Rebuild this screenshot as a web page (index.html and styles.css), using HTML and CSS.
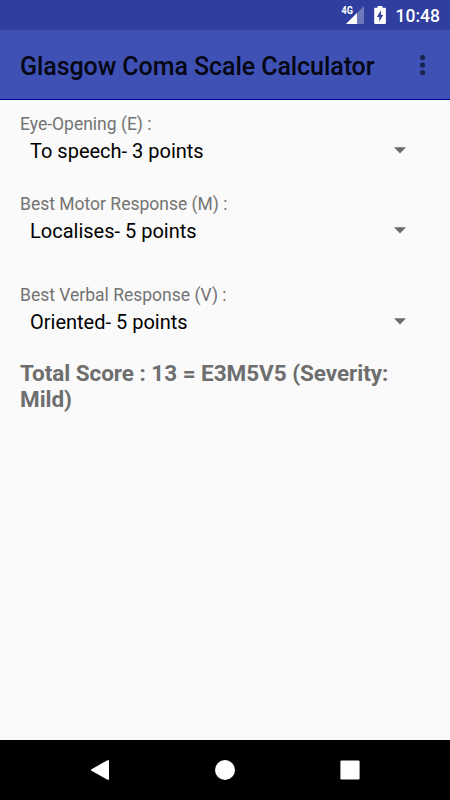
FILE: index.html
```
<!DOCTYPE html>
<html lang="en">
<head>
    <meta charset="UTF-8">
    <meta name="viewport" content="width=device-width, initial-scale=1.0">
    <title>Glasgow Coma Scale Calculator</title>
    <link rel="stylesheet" href="styles.css">
</head>
<body>
    <div class="status-bar">
        <svg class="signal" width="24" height="20" viewBox="0 0 24 20">
            <path d="M23 1v18H5z" fill="#fff" fill-opacity="0.3"/>
            <path d="M16 8v11H5z" fill="#fff"/>
            <rect x="0" y="0" width="12.5" height="10" fill="#303f9f"/>
            <text class="network" x="0.6" y="9" textLength="11.4" lengthAdjust="spacingAndGlyphs">4G</text>
        </svg>
        <svg class="battery" width="12" height="18" viewBox="0 0 12 18">
            <path d="M3.6 0h4.8v1.8h2.4q1.1 0 1.1 1.1v14q0 1.1-1.1 1.1H1.3q-1.1 0-1.1-1.1v-14q0-1.1 1.1-1.1h2.3z" fill="#fff"/>
            <path d="M7 4.2L2.9 11h2.4v4.8L9.2 8.9H7z" fill="#303f9f"/>
        </svg>
        <span class="clock">10:48</span>
    </div>
    <div class="app-bar">
        <h1 class="title">Glasgow Coma Scale Calculator</h1>
        <svg class="menu" width="6" height="22" viewBox="0 0 6 22">
            <circle cx="2.6" cy="3.5" r="2.6"/>
            <circle cx="2.6" cy="11" r="2.6"/>
            <circle cx="2.6" cy="18.5" r="2.6"/>
        </svg>
    </div>
    <div class="content">
        <div class="field">
            <div class="label">Eye-Opening (E) :</div>
            <div class="spinner">
                <span>To speech- 3 points</span>
                <svg class="arrow" width="12" height="7" viewBox="0 0 12 7"><path d="M0 0.3h12L6 6.5z"/></svg>
            </div>
        </div>
        <div class="field field-motor">
            <div class="label">Best Motor Response (M) :</div>
            <div class="spinner">
                <span>Localises- 5 points</span>
                <svg class="arrow" width="12" height="7" viewBox="0 0 12 7"><path d="M0 0.3h12L6 6.5z"/></svg>
            </div>
        </div>
        <div class="field">
            <div class="label">Best Verbal Response (V) :</div>
            <div class="spinner">
                <span>Oriented- 5 points</span>
                <svg class="arrow" width="12" height="7" viewBox="0 0 12 7"><path d="M0 0.3h12L6 6.5z"/></svg>
            </div>
        </div>
        <p class="total">Total Score : 13 = E3M5V5 (Severity: Mild)</p>
    </div>
    <div class="nav-bar">
        <svg width="20" height="22" viewBox="0 0 20 22"><path d="M18 2v18L2 11z" fill="#fff" stroke="#fff" stroke-width="2" stroke-linejoin="round"/></svg>
        <svg width="20" height="20" viewBox="0 0 20 20"><circle cx="10" cy="10" r="10" fill="#fff"/></svg>
        <svg width="20" height="20" viewBox="0 0 20 20"><rect x="0.4" y="0.4" width="19.2" height="19.2" rx="1.3" fill="#fff"/></svg>
    </div>
</body>
</html>
```
FILE: styles.css
```
body {
    font-family: Roboto, sans-serif;
    background-color: #fafafa;
    margin: 0;
    height: 100vh;
    display: flex;
    flex-direction: column;
    overflow: hidden;
}

svg {
    display: block;
    flex-shrink: 0;
}

.status-bar {
    background-color: #303f9f;
    color: #fff;
    height: 30px;
    display: flex;
    align-items: center;
    justify-content: flex-end;
    padding-right: 10px;
    box-sizing: border-box;
}

.signal {
    margin-right: 9.4px;
}

.network {
    font-size: 11.2px;
    font-weight: 700;
    fill: #fff;
}

.battery {
    margin-right: 9.6px;
}

.clock {
    font-size: 17.5px;
    font-weight: 500;
    line-height: 20px;
    padding-top: 1px;
}

.app-bar {
    background-color: #3f51b5;
    border-bottom: 1px solid #000090;
    height: 70px;
    display: flex;
    align-items: center;
    justify-content: space-between;
    padding: 0 24px 0 20px;
    box-sizing: border-box;
}

.title {
    font-size: 25px;
    font-weight: 500;
    line-height: 30px;
    letter-spacing: -0.07px;
    color: #050714;
    margin: 4px 0 0;
    white-space: nowrap;
}

.menu {
    fill: #1b234e;
    margin-top: 1px;
}

.content {
    flex: 1;
    padding: 14px 20px 0;
}

.field {
    height: 80px;
}

.field-motor {
    height: 91px;
}

.label {
    font-size: 17.5px;
    line-height: 21px;
    color: #737373;
}

.spinner {
    display: flex;
    align-items: center;
    justify-content: space-between;
    padding: 0 24px 0 10px;
    margin-top: 4px;
    font-size: 20px;
    line-height: 24px;
    color: #000;
}

.arrow {
    fill: #6b6b6b;
    margin-bottom: 1px;
}

.total {
    font-size: 22.5px;
    font-weight: 700;
    line-height: 26px;
    letter-spacing: -0.04px;
    color: #6e6e6e;
    margin: -5px 0 0;
}

.nav-bar {
    background-color: #000;
    height: 60px;
    display: flex;
    align-items: center;
    justify-content: space-between;
    padding: 0 90px;
}
```
